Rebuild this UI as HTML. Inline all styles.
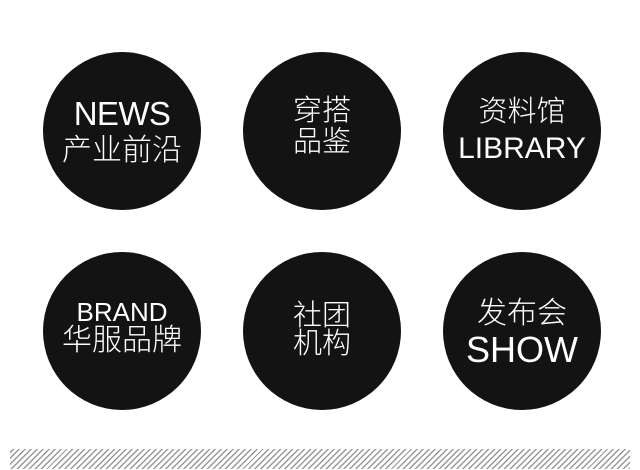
<!DOCTYPE html>
<html><head><meta charset="utf-8"><style>
html,body{margin:0;padding:0;background:#fff;width:640px;height:470px;overflow:hidden;position:relative}
.c{position:absolute;width:158px;height:158px;border-radius:50%;background:#131313}
.t{position:absolute;width:200px;text-align:center;color:#fff;white-space:nowrap;font-family:"Liberation Sans","Noto Sans CJK SC",sans-serif;font-weight:300}
.stripe{position:absolute;left:10px;top:449px;width:620px;height:20px;
background:repeating-linear-gradient(135deg,#fff 0 1.8px,#999 1.8px 3.2px,#fff 3.2px 4.2px)}
</style></head><body>
<div class="c" style="left:43px;top:52px"></div>
<div class="c" style="left:243px;top:52px"></div>
<div class="c" style="left:443px;top:52px"></div>
<div class="c" style="left:43px;top:252px"></div>
<div class="c" style="left:243px;top:252px"></div>
<div class="c" style="left:443px;top:252px"></div>

<div class="t" style="left:22px;top:97px;font-size:33px;line-height:33px;letter-spacing:-0.6px">NEWS</div>
<div class="t" style="left:22px;top:136px;font-size:30px;line-height:30px">产业前沿</div>

<div class="t" style="left:222px;top:97px;font-size:29px;line-height:29px">穿搭</div>
<div class="t" style="left:222px;top:128px;font-size:29px;line-height:29px">品鉴</div>

<div class="t" style="left:422px;top:98px;font-size:29px;line-height:29px">资料馆</div>
<div class="t" style="left:422px;top:134px;font-size:30px;line-height:30px">LIBRARY</div>

<div class="t" style="left:22px;top:299px;font-size:26px;line-height:26px">BRAND</div>
<div class="t" style="left:22px;top:326px;font-size:30px;line-height:30px">华服品牌</div>

<div class="t" style="left:222px;top:302px;font-size:29px;line-height:29px">社团</div>
<div class="t" style="left:222px;top:330px;font-size:29px;line-height:29px">机构</div>

<div class="t" style="left:422px;top:299px;font-size:30px;line-height:30px">发布会</div>
<div class="t" style="left:422px;top:332px;font-size:36px;line-height:36px">SHOW</div>

<div class="stripe"></div>
</body></html>
